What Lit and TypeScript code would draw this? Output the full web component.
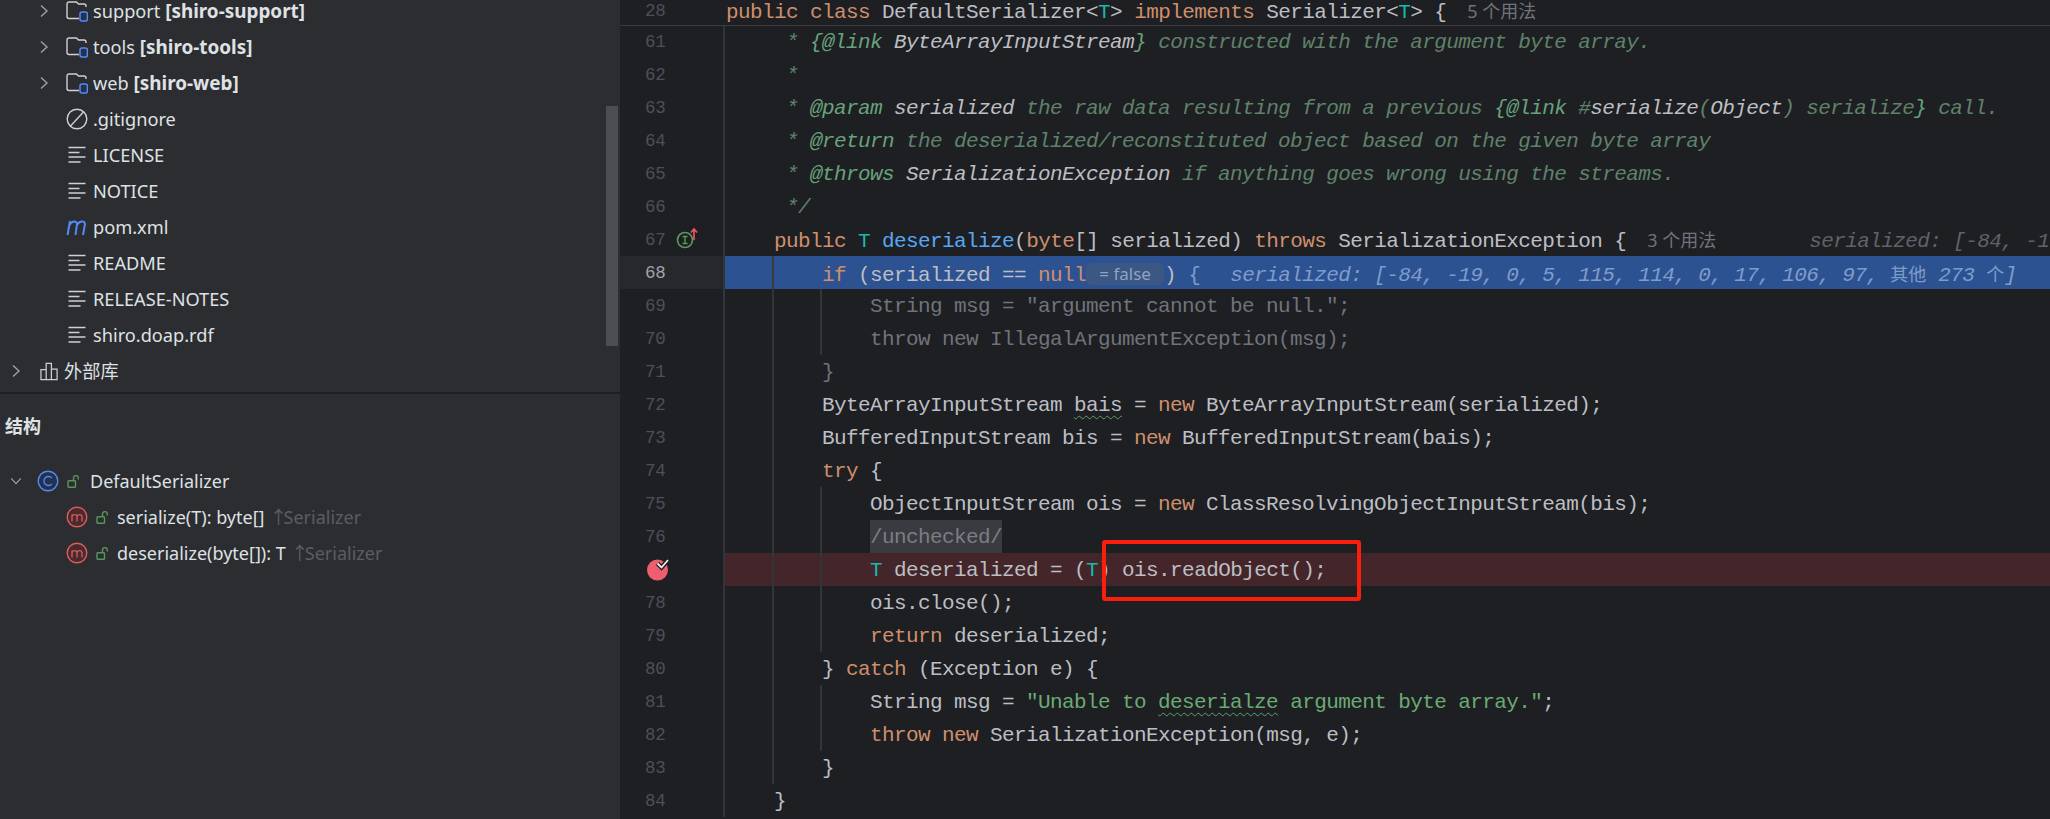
import { LitElement, html, css, TemplateResult } from "lit";
import { customElement } from "lit/decorators.js";

const folder = html`<svg class="ic" viewBox="0 0 22 22" fill="none"><path d="M20 5.500V4.500a2 2 0 0 0-2-2h-5.500l-2-2H3a2 2 0 0 0-2 2V15a2 2 0 0 0 2 2h10" transform="translate(0 1.500)" stroke="#ced0d6" stroke-width="1.400"/><rect x="14" y="12" width="7.400" height="9" rx="2" fill="#25324d" stroke="#548af7" stroke-width="1.500"/></svg>`;
const noIcon = html`<svg class="ic" viewBox="0 0 22 22" fill="none" stroke="#ced0d6" stroke-width="1.400"><circle cx="11" cy="11" r="9.800"/><path d="M4.500 18 17.500 4"/></svg>`;
const textIcon = html`<svg class="ic" viewBox="0 0 22 22" fill="none" stroke="#ced0d6" stroke-width="1.500"><path d="M2.500 3.500h17M2.500 8.500h11M2.500 13h17M2.500 18h12"/></svg>`;
const mvnIcon = html`<svg class="ic" viewBox="0 0 22 22" fill="none" stroke="#548af7" stroke-width="2"><path d="M1.500 19 4 5M3.500 9c2-4 7-5 7.500-1L9.500 19M11 9c2-4 7.500-5 8 -1l-2 11"/></svg>`;
const libIcon = html`<svg class="ic lib" viewBox="0 0 20 20" fill="none" stroke="#ced0d6" stroke-width="1.300"><path d="M1 8h5.500v10.500H1zM6.500 1.500H12v17H6.500zM12 7.500h6v11h-6z"/></svg>`;
const chevR = html`<svg class="chev" viewBox="0 0 12 14" fill="none" stroke="#9da0a8" stroke-width="1.400"><path d="M3 1.500 9 7l-6 5.500"/></svg>`;
const chevD = html`<svg class="chev" viewBox="0 0 14 12" fill="none" stroke="#9da0a8" stroke-width="1.400"><path d="M1.500 3 7 9l5.500-6"/></svg>`;
const lock = html`<svg class="lock" viewBox="0 0 13 13" fill="none" stroke="#57965c" stroke-width="1.400"><rect x="1" y="5.800" width="7.500" height="6.400" rx=".8"/><path d="M6.500 5.500V3a2.400 2.400 0 0 1 4.800 0v1.500"/></svg>`;
const classIcon = html`<svg class="ic" viewBox="0 0 22 22" fill="none"><circle cx="11" cy="11" r="9.800" fill="#25324d" stroke="#548af7" stroke-width="1.400"/><path d="M14.800 8a4.500 4.500 0 1 0 0 6" stroke="#548af7" stroke-width="1.300"/></svg>`;
const methodIcon = html`<svg class="ic" viewBox="0 0 22 22" fill="none"><circle cx="11" cy="11" r="9.800" fill="#4a2a2c" stroke="#db5c5c" stroke-width="1.400"/><path d="M6 15.500V8.500M6 10.500c.5-2.500 4.500-2.500 5 0v5M11 10.500c.5-2.500 4.500-2.500 5 0v5" stroke="#db5c5c" stroke-width="1.300"/></svg>`;
const implIcon = html`<svg class="implicon" viewBox="0 0 26 24" fill="none"><circle cx="9" cy="13" r="7.500" stroke="#57965c" stroke-width="1.700"/><path d="M6.500 9.500h5M6.500 16.500h5M9 9.500v7" stroke="#57965c" stroke-width="1.400"/><path d="M18 13V2M15 5.500l3-3.500 3 3.500" stroke="#f75464" stroke-width="1.600"/></svg>`;
const bpIcon = html`<svg class="bp" viewBox="0 0 24 24"><circle cx="11.500" cy="13" r="10.500" fill="#ed5e6e"/><path d="M11.500 6.500l4 4 6.500-7.500" fill="none" stroke="#1e1f22" stroke-width="4.500"/><path d="M11.500 6.500l4 4 6.500-7.500" fill="none" stroke="#eceef2" stroke-width="1.800"/></svg>`;

type Row = { n: number; code: TemplateResult; g?: number; cls?: string };
const K = (s: string) => html`<span class="k">${s}</span>`;
const T = html`<span class="t">T</span>`;
const C = (s: string) => html`<span class="c">${s}</span>`;
const TG = (s: string) => html`<span class="tag">${s}</span>`;
const R = (s: string) => html`<span class="ref">${s}</span>`;
const D = (s: string) => html`<span class="dim">${s}</span>`;
const S = (s: string) => html`<span class="s">${s}</span>`;

const rows: Row[] = [
  { n: 61, code: html`     ${C("* ")}${TG("{@link")} ${R("ByteArrayInputStream")}${TG("}")}${C(" constructed with the argument byte array.")}` },
  { n: 62, code: html`     ${C("*")}` },
  { n: 63, code: html`     ${C("* ")}${TG("@param")} ${R("serialized")}${C(" the raw data resulting from a previous ")}${TG("{@link")} ${C("#")}${R("serialize")}${C("(")}${R("Object")}${C(") serialize")}${TG("}")}${C(" call.")}` },
  { n: 64, code: html`     ${C("* ")}${TG("@return")}${C(" the deserialized/reconstituted object based on the given byte array")}` },
  { n: 65, code: html`     ${C("* ")}${TG("@throws")} ${R("SerializationException")}${C(" if anything goes wrong using the streams.")}` },
  { n: 66, code: html`     ${C("*/")}` },
  {
    n: 67,
    code: html`    ${K("public")} ${T} <span class="m">deserialize</span>(${K("byte")}[] serialized) ${K("throws")} SerializationException {<span class="uses first">3 个用法</span><span class="hint far">serialized: [-84, -19, 0, 5, 115, 114, 0, 17, 106, 97, 其他 273 个]</span>`,
  },
  {
    n: 68,
    g: 1,
    cls: "exec",
    code: html`        ${K("if")} (serialized == ${K("null")}<span class="badge">= false</span>) <span class="brace">{</span><span class="hint cur">serialized: [-84, -19, 0, 5, 115, 114, 0, 17, 106, 97, <span class="cjk">其他</span> 273 <span class="cjk">个</span>]</span>`,
  },
  { n: 69, g: 2, code: html`            ${D('String msg = "argument cannot be null.";')}` },
  { n: 70, g: 2, code: html`            ${D("throw new IllegalArgumentException(msg);")}` },
  { n: 71, g: 1, code: html`        ${D("}")}` },
  { n: 72, g: 1, code: html`        ByteArrayInputStream <span class="wavy">bais</span> = ${K("new")} ByteArrayInputStream(serialized);` },
  { n: 73, g: 1, code: html`        BufferedInputStream bis = ${K("new")} BufferedInputStream(bais);` },
  { n: 74, g: 1, code: html`        ${K("try")} {` },
  { n: 75, g: 2, code: html`            ObjectInputStream ois = ${K("new")} ClassResolvingObjectInputStream(bis);` },
  { n: 76, g: 2, code: html`            <span class="folded">/unchecked/</span>` },
  { n: 77, g: 2, cls: "bpline", code: html`            ${T} deserialized = (${T}) ois.readObject();` },
  { n: 78, g: 2, code: html`            ois.close();` },
  { n: 79, g: 2, code: html`            ${K("return")} deserialized;` },
  { n: 80, g: 1, code: html`        } ${K("catch")} (Exception e) {` },
  { n: 81, g: 2, code: html`            String msg = ${S('"Unable to ')}<span class="s wavy">deserialze</span>${S(' argument byte array."')};` },
  { n: 82, g: 2, code: html`            ${K("throw")} ${K("new")} SerializationException(msg, e);` },
  { n: 83, g: 1, code: html`        }` },
  { n: 84, code: html`    }` },
];

const tree: { icon: TemplateResult; text: TemplateResult; chev?: boolean }[] = [
  { icon: folder, chev: true, text: html`support <b>[shiro-support]</b>` },
  { icon: folder, chev: true, text: html`tools <b>[shiro-tools]</b>` },
  { icon: folder, chev: true, text: html`web <b>[shiro-web]</b>` },
  { icon: noIcon, text: html`.gitignore` },
  { icon: textIcon, text: html`LICENSE` },
  { icon: textIcon, text: html`NOTICE` },
  { icon: mvnIcon, text: html`pom.xml` },
  { icon: textIcon, text: html`README` },
  { icon: textIcon, text: html`RELEASE-NOTES` },
  { icon: textIcon, text: html`shiro.doap.rdf` },
];

@customElement("app-root")
export class AppRoot extends LitElement {
  static styles = css`
    :host { display: block; width: 2050px; height: 819px; overflow: hidden; background: #1e1f22; }
    .page { display: flex; height: 819px; font-family: "Noto Sans", "Noto Sans CJK SC", sans-serif; font-size: 18px; color: #dfe1e5; }
    .side { width: 620px; flex: none; background: #2b2d30; display: flex; flex-direction: column; position: relative; overflow: hidden; }
    .tree { height: 392px; flex: none; overflow: hidden; border-bottom: 2px solid #1e1f22; box-sizing: content-box; font-size: 18.200px; }
    .trow { height: 36px; display: flex; align-items: center; padding-left: 38px; }
    .tree .trow:first-child { margin-top: -7px; }
    .trow .slot { width: 28px; flex: none; display: flex; }
    .trow .ic { margin-right: 5px; }
    .lbl { white-space: pre; line-height: 36px; }
    .lbl b { font-weight: 700; font-size: 18.900px; }
    .ic { width: 22px; height: 22px; flex: none; display: block; }
    .lib { width: 19px; height: 19px; margin-right: 5px; }
    .chev { width: 12px; height: 14px; flex: none; display: block; }
    .libs { padding-left: 10px; }
    .libs .slot { width: 30px; }
    .title { height: 64px; display: flex; align-items: center; padding-left: 5px; font-weight: 700; font-size: 18px; color: #dfe1e5; font-family: "Noto Sans CJK SC", sans-serif; box-sizing: border-box; padding-bottom: 2px; }
    .sroot { padding-left: 10px; margin-top: 5px; }
    .sroot .slot { width: 27px; }
    .sroot .ic { margin-right: 8px; }
    .sroot .lock { margin-right: 10px; }
    .smem { padding-left: 66px; }
    .smem .ic { margin-right: 8px; }
    .smem .lock { margin-right: 8px; }
    .lock { width: 13px; height: 13px; flex: none; }
    .inh { color: #5a5d63; margin-left: 5px; }
    .arrow { letter-spacing: -4px; }
    .thumb { position: absolute; left: 606px; top: 106px; width: 12px; height: 240px; background: #4d4e51; }

    .editor { flex: 1; min-width: 0; position: relative; overflow: hidden; background: #1e1f22; font-family: "Liberation Mono", monospace; font-size: 21px; letter-spacing: -0.600px; color: #bcbec4; }
    .row { display: flex; height: 33px; line-height: 33px; }
    .sticky { height: 25px; line-height: 23px; box-shadow: 0 1px 0 #393b40; position: relative; z-index: 1; }
    .gutter { width: 103px; flex: none; display: flex; align-items: center; padding-left: 25px; box-sizing: border-box; font-size: 17.500px; letter-spacing: -0.300px; color: #4b5059; gap: 10px; padding-top: 1px; }
    .sticky .gutter { width: 105px; padding-top: 0; padding-bottom: 2px; }
    .num { width: 21px; }
    .gdiv { width: 2px; flex: none; background: #313438; }
    .code { flex: 1; min-width: 0; white-space: pre; overflow: hidden; padding-left: 1px; padding-top: 1px; box-sizing: border-box; }
    .sticky .code { padding-top: 0; }
    .g1 { background: linear-gradient(#313438, #313438) 47px 0 / 2px 100% no-repeat; }
    .g2 { background: linear-gradient(#313438, #313438) 47px 0 / 2px 100% no-repeat, linear-gradient(#313438, #313438) 95px 0 / 2px 100% no-repeat; }
    .exec .g1 { background: linear-gradient(#393b40, #393b40) 47px 0 / 2px 100% no-repeat, #2d5291; }
    .exec .gutter { background: #26282b; color: #a1a3ab; }
    .bpline .code { background-color: #44262a; }
    .k { color: #cf8e6d; }
    .t { color: #16baac; }
    .m { color: #56a8f5; }
    .c { color: #5f826b; font-style: italic; }
    .tag { color: #67a37c; font-style: italic; }
    .ref { color: #bcbec4; font-style: italic; }
    .dim { color: #6f737a; }
    .s { color: #6aab73; }
    .wavy { text-decoration: underline wavy #5f9e6a 1px; text-underline-offset: 4px; }
    .uses { font-family: "Noto Sans", "Noto Sans CJK SC", sans-serif; font-size: 18px; letter-spacing: 0; color: #6f737a; }
    .first { margin-left: 21px; }
    .hint { font-style: italic; }
    .far { color: #5f6269; margin-left: 93px; }
    .cur { color: #7f9ccb; margin-left: 30px; }
    .cjk { font-family: "Noto Sans CJK SC", sans-serif; font-size: 18px; letter-spacing: 0; font-style: normal; }
    .badge { display: inline-block; width: 78px; height: 22px; line-height: 21px; border-radius: 6px; background: #3b5784; color: #8fa3c4; font-family: "Noto Sans", sans-serif; font-size: 17px; letter-spacing: 0; text-align: center; vertical-align: 1px; }
    .brace { color: #7f9ccb; }
    .folded { background: #393b40; box-shadow: 0 -1px 0 #393b40; color: #7a7e85; display: inline-block; height: 32px; }
    .implicon { width: 26px; height: 24px; margin-top: -2px; flex: none; }
    .bp { width: 24px; height: 24px; flex: none; margin: -2px 0 0 1px; }
    .box { position: absolute; left: 482px; top: 540px; width: 259px; height: 61px; box-sizing: border-box; border: 4px solid #fa1e0f; border-radius: 3px; z-index: 2; }
  `;

  render() {
    return html`<div class="page">
      <div class="side">
        <div class="tree">
          ${tree.map(
            (r) => html`<div class="trow"><div class="slot">${r.chev ? chevR : ""}</div>${r.icon}<span class="lbl">${r.text}</span></div>`
          )}
          <div class="trow libs"><div class="slot">${chevR}</div>${libIcon}<span class="lbl">外部库</span></div>
        </div>
        <div class="title">结构</div>
        <div class="trow sroot"><div class="slot">${chevD}</div>${classIcon}${lock}<span class="lbl">DefaultSerializer</span></div>
        <div class="trow smem">${methodIcon}${lock}<span class="lbl">serialize(T): byte[]<span class="inh"><span class="arrow">↑</span>Serializer</span></span></div>
        <div class="trow smem">${methodIcon}${lock}<span class="lbl">deserialize(byte[]): T<span class="inh"><span class="arrow">↑</span>Serializer</span></span></div>
        <div class="thumb"></div>
      </div>
      <div class="editor">
        <div class="row sticky">
          <div class="gutter"><span class="num">28</span></div>
          <div class="code">${K("public")} ${K("class")} DefaultSerializer&lt;${T}&gt; ${K("implements")} Serializer&lt;${T}&gt; {<span class="uses first">5 个用法</span></div>
        </div>
        ${rows.map(
          (r) => html`<div class="row ${r.cls ?? ""}">
            <div class="gutter">${r.n === 77 ? bpIcon : html`<span class="num">${r.n}</span>`}${r.n === 67 ? implIcon : ""}</div>
            <div class="gdiv"></div>
            <div class="code ${r.g ? "g" + r.g : ""}">${r.code}</div>
          </div>`
        )}
        <div class="box"></div>
      </div>
    </div>`;
  }
}
